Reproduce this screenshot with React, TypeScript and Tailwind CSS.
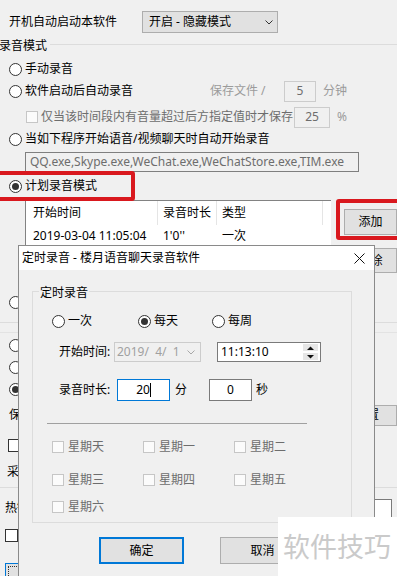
import React from 'react';

function Radio({ checked }: { checked?: boolean }) {
  return (
    <span className="grid h-[13px] w-[13px] shrink-0 place-items-center rounded-full border border-[#333333] bg-white">
      {checked && <span className="h-[7px] w-[7px] rounded-full bg-[#333333]" />}
    </span>
  );
}

function Box({ disabled }: { disabled?: boolean }) {
  return (
    <span
      className={
        disabled
          ? 'h-[12px] w-[12px] shrink-0 border border-[#c6c6c6] bg-[#fbfbfb]'
          : 'h-[13px] w-[13px] shrink-0 border border-[#333333] bg-white'
      }
    />
  );
}

function Chevron({ color = '#333333' }: { color?: string }) {
  return (
    <svg width="8" height="5" viewBox="0 0 8 5">
      <path d="M0.5 0.5L4 4L7.5 0.5" fill="none" stroke={color} strokeWidth="1" />
    </svg>
  );
}

function Day({ label }: { label: string }) {
  return (
    <div className="flex w-[91px] items-center gap-[4px]">
      <Box disabled />
      <span>{label}</span>
    </div>
  );
}

function MainWindow() {
  return (
    <div className="flex flex-col">
      <div className="mt-[11px] flex h-[22px] items-center">
        <span className="w-[142px] pl-[9px]">开机自动启动本软件</span>
        <div className="flex h-[22px] w-[136px] items-center justify-between border border-[#adadad] bg-[#e1e1e1] pl-[6px] pr-[4px]">
          <span>开启 - 隐藏模式</span>
          <Chevron />
        </div>
      </div>

      <div className="mt-[5px] flex h-[16px] items-start">
        <span className="-ml-[1px]">录音模式</span>
        <div className="ml-[3px] mt-[6px] h-px flex-1 bg-[#dcdcdc]" />
      </div>

      <div className="mt-[4px] flex h-[22px] items-center gap-[3px] pl-[9px]">
        <Radio />
        <span>手动录音</span>
      </div>
      <div className="flex h-[22px] items-center pl-[9px]">
        <Radio />
        <span className="ml-[3px] w-[185px]">软件启动后自动录音</span>
        <span className="w-[74px] text-[#9b9b9b]">保存文件 /</span>
        <div className="flex h-[21px] w-[32px] items-center justify-center border border-[#cccccc] text-[#6d6d6d]">5</div>
        <span className="ml-[7px] text-[#9b9b9b]">分钟</span>
      </div>
      <div className="mt-[4px] flex h-[22px] items-center pl-[26px] text-[#6d6d6d]">
        <Box disabled />
        <span className="ml-[3px] w-[252px] whitespace-nowrap">仅当该时间段内有音量超过后方指定值时才保存</span>
        <div className="ml-[1px] flex h-[21px] w-[36px] items-center justify-center border border-[#cccccc]">25</div>
        <span className="ml-[7px] text-[#9b9b9b]">%</span>
      </div>
      <div className="flex h-[22px] items-center gap-[3px] pl-[9px]">
        <Radio />
        <span className="whitespace-nowrap">当如下程序开始语音/视频聊天时自动开始录音</span>
      </div>
      <div className="ml-[25px] mt-[2px] flex h-[20px] w-[334px] items-center overflow-hidden whitespace-nowrap border border-[#7f7f7f] pl-[4px] text-[#6d6d6d]">
        QQ.exe,Skype.exe,WeChat.exe,WeChatStore.exe,TIM.exe
      </div>
      <div className="mt-[3px] flex h-[22px] items-center gap-[3px] pl-[9px]">
        <Radio checked />
        <span>计划录音模式</span>
      </div>

      <div className="mt-[3px] flex items-start">
        <div className="ml-[25px] h-[86px] w-[311px] border-l border-t border-[#828282] bg-white">
          <div className="flex h-[24px] items-center">
            <div className="w-[131px] pl-[7px]">开始时间</div>
            <div className="h-full w-px bg-[#e5e5e5]" />
            <div className="w-[58px] pl-[5px]">录音时长</div>
            <div className="h-full w-px bg-[#e5e5e5]" />
            <div className="w-[105px] pl-[5px]">类型</div>
            <div className="h-full w-px bg-[#e5e5e5]" />
          </div>
          <div className="flex h-[21px] items-center">
            <div className="w-[132px] pl-[7px]">2019-03-04 11:05:04</div>
            <div className="w-[59px] pl-[5px]">1'0''</div>
            <div className="pl-[5px]">一次</div>
          </div>
        </div>
        <div className="ml-[13px] flex flex-col">
          <div className="mt-[9px] grid h-[26px] w-[53px] place-items-center border border-[#adadad] bg-[#e1e1e1]">添加</div>
          <div className="mt-[13px] grid h-[25px] w-[53px] place-items-center border border-[#adadad] bg-[#e1e1e1]">删除</div>
        </div>
      </div>

      {/* rows behind the dialog: only their left edge shows */}
      <div className="mt-[5px] flex h-[22px] items-center pl-[9px]">
        <Radio />
      </div>
      <div className="mt-[9px] h-px bg-[#dcdcdc]" />
      <div className="mt-[9px] h-px bg-[#e3e3e3]" />
      <div className="mt-[1px] flex h-[22px] items-center gap-[3px] pl-[9px]">
        <Radio />
        <span>MP3</span>
      </div>
      <div className="flex h-[22px] items-center gap-[3px] pl-[9px]">
        <Radio />
        <span>WAV</span>
      </div>
      <div className="flex h-[22px] items-center gap-[3px] pl-[9px]">
        <Radio checked />
        <span>AMR</span>
      </div>
      <div className="mt-[4px] flex h-[22px] items-center pl-[9px]">
        <span>保存路径：</span>
        <div className="ml-auto grid h-[21px] w-[60px] place-items-center border border-[#adadad] bg-[#e1e1e1]">设置</div>
      </div>
      <div className="mt-[8px] flex h-[22px] items-center gap-[3px] pl-[8px]">
        <Box />
        <span>自动</span>
      </div>
      <div className="mt-[5px] flex h-[22px] items-center pl-[7px]">
        <span>采样率</span>
      </div>
      <div className="mt-[4px] h-px bg-[#dcdcdc]" />
      <div className="mt-[9px] flex h-[22px] items-center pl-[5px]">
        <span>热键设置</span>
        <div className="ml-auto mr-[5px] h-[19px] w-[60px] border border-[#7a7a7a] bg-white" />
      </div>
      <div className="mt-[5px] flex h-[22px] items-center gap-[3px] pl-[5px]">
        <Box />
        <span>开机启动</span>
      </div>
      <div className="ml-[5px] mt-[17px] h-[26px] w-[75px] border border-[#0078d7] bg-[#e1e1e1] p-[2px]">
        <div className="h-full w-full border border-dotted border-[#333333]" />
      </div>
    </div>
  );
}

function ScheduleDialog() {
  return (
    <div className="absolute left-[18px] top-[245px] flex h-[350px] w-[357px] flex-col border border-[#8a8a8a] bg-[#f0f0f0]">
      <div className="flex h-[24px] items-center justify-between bg-white pl-[3px] pr-[9px]">
        <span>定时录音 - 楼月语音聊天录音软件</span>
        <svg width="11" height="11" viewBox="0 0 11 11">
          <path d="M0.5 0.5L10.5 10.5M10.5 0.5L0.5 10.5" stroke="#111111" strokeWidth="1" />
        </svg>
      </div>

      <div className="relative ml-[13px] mt-[21px] h-[232px] w-[320px] border border-[#dcdcdc]">
        <span className="absolute -top-[7px] left-[6px] bg-[#f0f0f0] px-px">定时录音</span>

        <div className="ml-[19px] mt-[19px] flex h-[20px] items-center">
          <div className="flex w-[86px] items-center gap-[3px]">
            <Radio />
            <span>一次</span>
          </div>
          <div className="flex w-[74px] items-center gap-[3px]">
            <Radio checked />
            <span>每天</span>
          </div>
          <div className="flex items-center gap-[3px]">
            <Radio />
            <span>每周</span>
          </div>
        </div>

        <div className="ml-[26px] mt-[11px] flex h-[20px] items-center">
          <span className="w-[55px]">开始时间:</span>
          <div className="flex h-[20px] w-[87px] items-center justify-between border border-[#cccccc] pl-[2px] pr-[5px] text-[#a0a0a0]">
            <span className="whitespace-pre">2019/  4/  1</span>
            <Chevron color="#a8a8a8" />
          </div>
          <div className="ml-[16px] flex h-[20px] w-[104px] items-center justify-between border border-[#7a7a7a] bg-white pl-[3px] pr-[2px]">
            <span>11:13:10</span>
            <div className="flex h-[16px] w-[15px] flex-col justify-between">
              <div className="grid h-[7px] place-items-center bg-[#e6e6e6]">
                <svg width="7" height="4" viewBox="0 0 7 4">
                  <path d="M0 4L3.5 0.5L7 4Z" fill="#111111" />
                </svg>
              </div>
              <div className="grid h-[7px] place-items-center bg-[#e6e6e6]">
                <svg width="7" height="4" viewBox="0 0 7 4">
                  <path d="M0 0L3.5 3.5L7 0Z" fill="#111111" />
                </svg>
              </div>
            </div>
          </div>
        </div>

        <div className="ml-[26px] mt-[17px] flex h-[22px] items-center">
          <span className="w-[58px]">录音时长:</span>
          <div className="flex h-[22px] w-[53px] items-center justify-center border border-[#0078d7] bg-white">
            <span>20</span>
            <span className="h-[14px] w-px bg-black" />
          </div>
          <span className="ml-[5px]">分</span>
          <div className="ml-[22px] flex h-[22px] w-[43px] items-center justify-center border border-[#7a7a7a] bg-white">0</div>
          <span className="ml-[4px]">秒</span>
        </div>

        <div className="ml-[14px] mt-[22px] h-px w-[260px] bg-[#a0a0a0]" />

        <div className="ml-[19px] mt-[15px] flex h-[16px] items-center text-[#6d6d6d]">
          <Day label="星期天" />
          <Day label="星期一" />
          <Day label="星期二" />
        </div>
        <div className="ml-[19px] mt-[17px] flex h-[16px] items-center text-[#6d6d6d]">
          <Day label="星期三" />
          <Day label="星期四" />
          <Day label="星期五" />
        </div>
        <div className="ml-[19px] mt-[11px] flex h-[16px] items-center text-[#6d6d6d]">
          <Day label="星期六" />
        </div>
      </div>

      <div className="ml-[80px] mt-[14px] flex gap-[36px]">
        <div className="grid h-[27px] w-[85px] place-items-center border-2 border-[#0078d7] bg-[#e1e1e1]">确定</div>
        <div className="grid h-[27px] w-[85px] place-items-center border border-[#adadad] bg-[#e1e1e1]">取消</div>
      </div>
    </div>
  );
}

export default function App() {
  return (
    <div className="relative h-[576px] w-[397px] overflow-hidden bg-[#f0f0f0] font-['Noto_Sans','Noto_Sans_CJK_SC',sans-serif] text-[12px] leading-[16px] text-black">
      <MainWindow />
      {/* red annotation frames */}
      <div className="absolute left-[-6px] top-[171px] h-[30px] w-[141px] rounded-[3px] border-4 border-[#d9181e]" />
      <div className="absolute left-[336px] top-[199px] h-[41px] w-[70px] rounded-[3px] border-4 border-[#d9181e]" />
      <ScheduleDialog />
      {/* watermark */}
      <div className="absolute left-[278px] top-[517px] flex h-[59px] w-[119px] items-center bg-white pl-[5px] text-[27px] leading-none text-[#cacaca]">
        软件技巧
      </div>
    </div>
  );
}
